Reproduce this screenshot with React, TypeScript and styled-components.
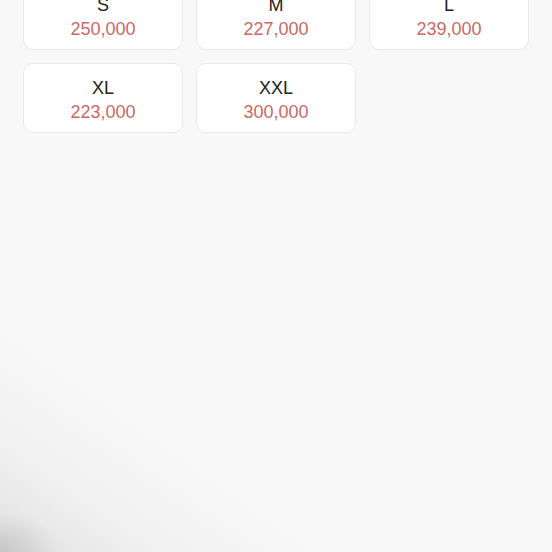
import React from "react";
import styled, { createGlobalStyle } from "styled-components";

const GlobalStyle = createGlobalStyle`
  html, body {
    margin:0;
    padding:0;
    width:552px;
    height:552px;
    overflow:hidden;
  }
  body {
    font-family:"Liberation Sans", Arial, sans-serif;
    background:#f8f8f8;
  }
`;

const Page = styled.div`
  width:552px;
  height:552px;
  overflow:hidden;
  background:
    radial-gradient(ellipse 60px 40px at 0% 100%, rgba(170,170,170,0.5), rgba(170,170,170,0) 100%),
    linear-gradient(35deg, rgba(215,215,215,0.7) 0%, rgba(232,232,232,0.45) 12%, rgba(248,248,248,0) 24%),
    #f8f8f8;
`;

const SizeGrid = styled.div`
  display:grid;
  grid-template-columns:repeat(3, 160px);
  column-gap:13px;
  row-gap:13px;
  padding:0 23px;
  margin-top:-20px;
`;

const SizeCard = styled.div`
  box-sizing:border-box;
  height:70px;
  background:#fff;
  border:1px solid #e9e9e9;
  border-radius:10px;
  display:flex;
  flex-direction:column;
  align-items:center;
  padding-top:14px;
`;

const Label = styled.div`
  font-size:18px;
  line-height:21.6px;
  color:#222;
`;

const Price = styled.div`
  margin-top:2px;
  font-size:18px;
  line-height:21.6px;
  color:#c86a64;
`;

const sizes = [
  { label: "S", price: "250,000" },
  { label: "M", price: "227,000" },
  { label: "L", price: "239,000" },
  { label: "XL", price: "223,000" },
  { label: "XXL", price: "300,000" },
];

function App() {
  return (
    <Page>
      <GlobalStyle />
      <SizeGrid>
        {sizes.map((s) => (
          <SizeCard key={s.label}>
            <Label>{s.label}</Label>
            <Price>{s.price}</Price>
          </SizeCard>
        ))}
      </SizeGrid>
    </Page>
  );
}

export default App;
